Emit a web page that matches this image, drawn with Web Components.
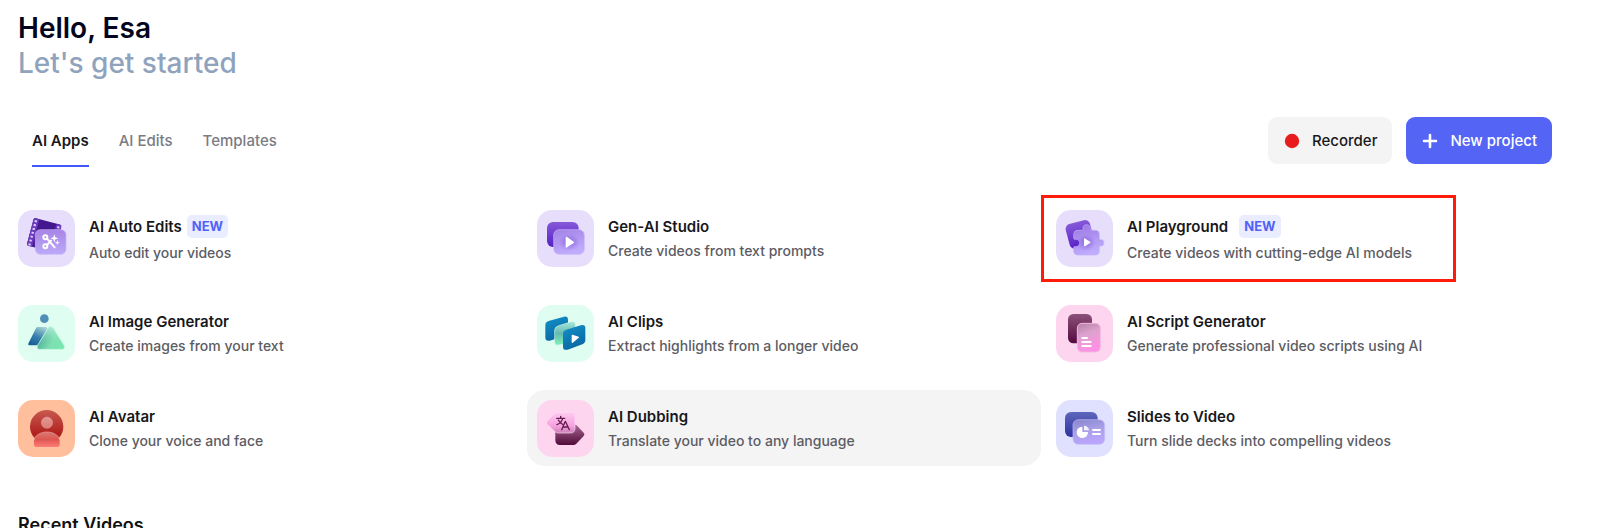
<!DOCTYPE html>
<html lang="en">
<head>
<meta charset="utf-8">
<meta name="viewport" content="width=device-width, initial-scale=1">
<title>Home</title>
<style>
  body{margin:0;background:#fff;color:#18181b;font-family:Inter,"Liberation Sans",sans-serif}
</style>
</head>
<body>
<home-page>
  <page-greeting slot="greeting">Hello, Esa<span slot="sub">Let's get started</span></page-greeting>
  <tab-strip slot="tabs"></tab-strip>
  <action-button slot="actions" kind="recorder">Recorder</action-button>
  <action-button slot="actions" kind="primary">New project</action-button>

  <app-card icon="edits" badge="NEW" heading="AI Auto Edits">Auto edit your videos</app-card>
  <app-card icon="studio" heading="Gen-AI Studio">Create videos from text prompts</app-card>
  <app-card icon="playground" badge="NEW" marked heading="AI Playground">Create videos with cutting-edge AI models</app-card>
  <app-card icon="image" heading="AI Image Generator">Create images from your text</app-card>
  <app-card icon="clips" heading="AI Clips">Extract highlights from a longer video</app-card>
  <app-card icon="script" heading="AI Script Generator">Generate professional video scripts using AI</app-card>
  <app-card icon="avatar" heading="AI Avatar">Clone your voice and face</app-card>
  <app-card icon="dubbing" active heading="AI Dubbing">Translate your video to any language</app-card>
  <app-card icon="slides" heading="Slides to Video">Turn slide decks into compelling videos</app-card>

  <span slot="recent">Recent Videos</span>
</home-page>

<script>
// tile colour + drawing, all on a 171 unit square
const ICONS={
  edits:{bg:'#e7defc',art:`
    <defs>
      <linearGradient id="g" x2="0" y2="1"><stop stop-color="#a884e6"/><stop offset="1" stop-color="#bca9f8"/></linearGradient>
      <linearGradient id="e" x2="1" y2="1"><stop stop-color="#c9b4f5"/><stop offset="1" stop-color="#c7b8fb"/></linearGradient>
    </defs>
    <g transform="translate(48 23) rotate(15)">
      <rect width="86" height="86" rx="6" fill="#43188f"/>
      <rect width="17" height="86" rx="5" fill="#6a38bd"/>
      <rect x="70" width="16" height="86" rx="5" fill="#6a38bd"/>
      <path d="M8 6v78M78 6v78" stroke="#ddcdfb" stroke-width="7" stroke-dasharray="6 6"/>
    </g>
    <rect x="52" y="59" width="92" height="74" rx="15" fill="url(#g)" stroke="url(#e)" stroke-width="2"/>
    <g fill="none" stroke="#fff" stroke-width="6" stroke-linecap="round">
      <circle cx="82" cy="82" r="6"/><circle cx="82" cy="109" r="6"/>
      <path d="M87 86l23 26M87 105l12-13"/>
    </g>
    <path d="M109 73l3 9 9 3-9 3-3 9-3-9-9-3 9-3zM118 90l2 6 6 2-6 2-2 6-2-6-6-2 6-2z" fill="#fff"/>`},
  studio:{bg:'#e7defc',art:`
    <defs>
      <linearGradient id="b" x2="0" y2="1"><stop stop-color="#8659d9"/><stop offset="1" stop-color="#5620c5"/></linearGradient>
      <linearGradient id="g" x2=".3" y2="1"><stop stop-color="#a382e6"/><stop offset="1" stop-color="#bfacfc"/></linearGradient>
      <radialGradient id="s"><stop stop-color="#7440cc" stop-opacity=".55"/><stop offset="1" stop-color="#7440cc" stop-opacity="0"/></radialGradient>
    </defs>
    <rect x="30" y="36" width="95" height="75" rx="18" fill="url(#b)"/>
    <rect x="50" y="59" width="92" height="74" rx="16" fill="url(#g)" stroke="#c9b8fa" stroke-width="2"/>
    <ellipse cx="97" cy="97" rx="32" ry="25" fill="url(#s)"/>
    <path d="M88 82v29l21-14z" fill="#fff" stroke="#fff" stroke-width="4" stroke-linejoin="round"/>`},
  playground:{bg:'#e7defc',art:`
    <defs>
      <linearGradient id="b" x2="0" y2="1"><stop stop-color="#8659d9"/><stop offset="1" stop-color="#5620c5"/></linearGradient>
      <linearGradient id="g" x2=".3" y2="1"><stop stop-color="#9a75e2"/><stop offset="1" stop-color="#bfacfc"/></linearGradient>
      <radialGradient id="s"><stop stop-color="#7440cc" stop-opacity=".55"/><stop offset="1" stop-color="#7440cc" stop-opacity="0"/></radialGradient>
    </defs>
    <rect x="34" y="35" width="75" height="76" rx="15" transform="rotate(-15 72 73)" fill="url(#b)"/>
    <path d="M66 61h12q4 0 3-5c-1-8 4-12 11-12s12 4 11 12q-1 5 3 5h11q13 0 13 13v12q0 4 4 3c13-2 13 21 0 19q-4-1-4 4v10q0 13-13 13H66q-13 0-13-13v-9q0-4 5-3c17 1 17-24 0-22q-5 1-5-4V74q0-13 13-13z" fill="url(#g)" stroke="#c3affa" stroke-width="2"/>
    <ellipse cx="90" cy="98" rx="28" ry="25" fill="url(#s)"/>
    <path d="M86 87v20l15-10z" fill="#fff" stroke="#fff" stroke-width="4" stroke-linejoin="round"/>`},
  image:{bg:'#dffdf0',art:`
    <defs>
      <linearGradient id="b" x1=".8" y1="0" x2=".3" y2="1"><stop stop-color="#a5d3d3"/><stop offset=".55" stop-color="#397fae"/><stop offset="1" stop-color="#196299"/></linearGradient>
      <linearGradient id="g" x1="0" y1=".6" x2="1" y2="1"><stop stop-color="#4fae9a"/><stop offset=".5" stop-color="#7edfb2"/><stop offset="1" stop-color="#73e9ae"/></linearGradient>
      <linearGradient id="h" x2="0" y2="1"><stop stop-color="#d5faec" stop-opacity=".75"/><stop offset=".7" stop-color="#8ce8bb" stop-opacity="0"/></linearGradient>
    </defs>
    <circle cx="79" cy="41" r="13" fill="#508fb8"/>
    <path d="M59 66h23q8 0 4 8l-25 43q-2 4-7 4H36q-8 0-4-8l22-43q2-4 5-4z" fill="url(#b)"/>
    <path d="M90 70q8-10 16 0l32 51q5 11-6 12H65q-11-1-6-12z" fill="url(#g)"/>
    <path d="M90 70q8-10 16 0l32 51q5 11-6 12H65q-11-1-6-12z" fill="url(#h)" stroke="#c4f8de" stroke-width="2"/>`},
  clips:{bg:'#dffdf0',art:`
    <defs>
      <linearGradient id="b" x2=".4" y2="1"><stop stop-color="#1492c9"/><stop offset="1" stop-color="#0968a4"/></linearGradient>
      <linearGradient id="g" x2="0" y2="1"><stop stop-color="#a9e7da"/><stop offset=".5" stop-color="#63b9b1"/><stop offset="1" stop-color="#82f3b8"/></linearGradient>
    </defs>
    <path d="M37 47l44-12q12-2 12 10v36q0 9-9 12l-46 14q-13 3-13-11V60q0-10 12-13z" fill="url(#b)"/>
    <path d="M65 62l36-11q13-4 14 8v39q0 9-9 12l-41 10q-12 2-12-10V75q0-9 12-13z" fill="url(#g)" stroke="#c7f7e7" stroke-width="2"/>
    <path d="M88 74l43-13q14-3 14 8v36q0 9-9 13l-44 16q-14 3-14-9V87q0-10 10-13z" fill="url(#b)"/>
    <path d="M106 91v21l18-15z" fill="#fff" stroke="#fff" stroke-width="4" stroke-linejoin="round"/>`},
  script:{bg:'#fdd5ee',art:`
    <defs>
      <linearGradient id="b" x2="0" y2="1"><stop stop-color="#8b5279"/><stop offset="1" stop-color="#560840"/></linearGradient>
      <linearGradient id="g" x2=".3" y2="1"><stop stop-color="#b582a5"/><stop offset=".45" stop-color="#dda1ce"/><stop offset="1" stop-color="#ff91e5"/></linearGradient>
    </defs>
    <rect x="36" y="27" width="72" height="88" rx="16" fill="url(#b)"/>
    <rect x="64" y="55" width="69" height="86" rx="14" fill="url(#g)" stroke="#f4b8e1" stroke-width="3"/>
    <path d="M79 99h14M79 111h25M79 123h25" stroke="#fff" stroke-width="6" stroke-linecap="round"/>`},
  avatar:{bg:'#ffbf9d',art:`
    <defs>
      <linearGradient id="b" x2="0" y2="1"><stop stop-color="#c75a51"/><stop offset=".75" stop-color="#af1e1b"/><stop offset="1" stop-color="#cf5e50"/></linearGradient>
      <linearGradient id="g" x2="0" y2="1"><stop stop-color="#e29791"/><stop offset="1" stop-color="#de7d77"/></linearGradient>
      <linearGradient id="h" x2="0" y2="1"><stop stop-color="#d57871"/><stop offset=".5" stop-color="#df5753"/><stop offset="1" stop-color="#fe7b76"/></linearGradient>
    </defs>
    <circle cx="86" cy="80" r="50" fill="url(#b)"/>
    <circle cx="87" cy="68" r="17" fill="url(#g)" stroke="#f0b8b0" stroke-width="1"/>
    <path d="M48 134v-13c3-16 21-25 39-25s35 9 38 25v13q0 7-7 7H55q-7 0-7-7z" fill="url(#h)"/>
    <path d="M48 121c3-16 21-25 39-25s35 9 38 25" fill="none" stroke="#f1a39c" stroke-width="2"/>`},
  dubbing:{bg:'#fdd5ee',art:`
    <defs>
      <linearGradient id="b" x2="0" y2="1"><stop stop-color="#a86995"/><stop offset="1" stop-color="#510b39"/></linearGradient>
      <linearGradient id="g" x2="0" y2="1"><stop stop-color="#fecbf0"/><stop offset=".65" stop-color="#f6a2df"/><stop offset="1" stop-color="#cb80b7"/></linearGradient>
    </defs>
    <path d="M69 73h41q7 0 11 5l19 20q5 5 0 10l-22 23q-4 4-9 4H69q-14 0-14-14V87q0-14 14-14z" fill="url(#b)"/>
    <path d="M60 37h40q14 0 14 14v34q0 14-14 14H64q-7 0-11-5L31 73q-5-5 0-10l19-21q4-5 10-5z" fill="url(#g)" stroke="#ffdcf5" stroke-width="2"/>
    <g fill="none" stroke="#651c4e" stroke-width="4" stroke-linecap="round" stroke-linejoin="round">
      <path d="M59 55h24M71 49v6M77 56q-4 13-17 18M64 60q5 9 13 13"/>
      <path d="M74 89l11-25 12 25M78 81h15"/>
    </g>`},
  slides:{bg:'#e0e1ff',art:`
    <defs>
      <linearGradient id="b" x2="0" y2="1"><stop stop-color="#5e66bb"/><stop offset="1" stop-color="#2c32a0"/></linearGradient>
      <linearGradient id="g" x2=".3" y2="1"><stop stop-color="#8785cd"/><stop offset=".55" stop-color="#aaa1e9"/><stop offset="1" stop-color="#b9a5fc"/></linearGradient>
    </defs>
    <rect x="27" y="36" width="98" height="75" rx="18" fill="url(#b)"/>
    <rect x="51" y="59" width="95" height="74" rx="16" fill="url(#g)" stroke="#c5bdf8" stroke-width="2"/>
    <path d="M79 80v16h17a17 17 0 1 1-17-16z" fill="#fff"/>
    <path d="M84 77a15 15 0 0 1 15 14H84z" fill="#fff" opacity=".85"/>
    <path d="M111 90h21M111 102h21" stroke="#fff" stroke-width="6" stroke-linecap="round"/>`}
};

class HomePage extends HTMLElement{
  constructor(){
    super();
    this.attachShadow({mode:'open'}).innerHTML=`
      <style>
        :host{display:block;padding:11px 40px 0 8px}
        .bar{display:flex;justify-content:space-between;align-items:flex-start;margin:36px 8px 0 24px}
        .actions{display:flex;gap:14px}
        .grid{display:grid;grid-template-columns:repeat(3,minmax(0,1fr));gap:19px 5px;margin-top:33px}
        h2{margin:45px 10px 0;font-size:18px;line-height:28px;font-weight:600;color:#111}
      </style>
      <slot name="greeting"></slot>
      <div class="bar">
        <slot name="tabs"></slot>
        <div class="actions"><slot name="actions"></slot></div>
      </div>
      <main class="grid"><slot></slot></main>
      <h2><slot name="recent"></slot></h2>`;
  }
}
customElements.define('home-page',HomePage);

class PageGreeting extends HTMLElement{
  constructor(){
    super();
    this.attachShadow({mode:'open'}).innerHTML=`
      <style>
        :host{display:block;padding-left:10px;font-size:28px;line-height:35px}
        h1,p{margin:0;font-size:inherit}
        h1{font-weight:600;color:#020420}
        p{font-weight:500;color:#8fa3bd}
      </style>
      <h1><slot></slot></h1>
      <p><slot name="sub"></slot></p>`;
  }
}
customElements.define('page-greeting',PageGreeting);

class TabStrip extends HTMLElement{
  constructor(){
    super(); this.attachShadow({mode:'open'});
    this._tabs=['AI Apps','AI Edits','Templates']; this._active=0;
  }
  connectedCallback(){ this.render(); }
  render(){
    this.shadowRoot.innerHTML=`
      <style>
        :host{display:block}
        .tabs{display:flex;gap:30px}
        button{
          padding:12px 0;border:0;border-bottom:2px solid transparent;background:none;
          font-family:inherit;font-size:15px;line-height:24px;font-weight:500;color:#7b7b83;cursor:pointer
        }
        button[aria-selected=true]{font-weight:600;color:#18181b;border-color:#4356fb}
      </style>
      <div class="tabs" role="tablist">
        ${this._tabs.map((t,i)=>`<button role="tab" aria-selected="${i===this._active}">${t}</button>`).join('')}
      </div>`;
    this.shadowRoot.querySelectorAll('button').forEach((b,i)=>b.onclick=()=>{ this._active=i; this.render(); });
  }
}
customElements.define('tab-strip',TabStrip);

class ActionButton extends HTMLElement{
  connectedCallback(){
    if(this.shadowRoot) return;
    const primary=this.getAttribute('kind')==='primary';
    this.attachShadow({mode:'open'}).innerHTML=`
      <style>
        :host{display:block}
        button{
          display:flex;align-items:center;gap:11px;height:47px;padding:0 15px;border:0;border-radius:9px;
          background:#f4f4f5;color:#18181b;font-family:inherit;font-size:15px;font-weight:500;white-space:nowrap;cursor:pointer
        }
        button.primary{background:#5465f5;color:#fff}
        svg{display:block;width:18px;height:18px}
      </style>
      <button class="${primary?'primary':''}">
        ${primary
          ?'<svg viewBox="0 0 18 18"><path d="M9 3v12M3 9h12" stroke="#fff" stroke-width="2.6" stroke-linecap="round"/></svg>'
          :'<svg viewBox="0 0 18 18"><circle cx="9" cy="9" r="7.2" fill="#e81c1c"/></svg>'}
        <span><slot></slot></span>
      </button>`;
  }
}
customElements.define('action-button',ActionButton);

class AppCard extends HTMLElement{
  connectedCallback(){
    if(this.shadowRoot) return;
    const icon=ICONS[this.getAttribute('icon')];
    const badge=this.getAttribute('badge');
    this.attachShadow({mode:'open'}).innerHTML=`
      <style>
        :host{display:block;position:relative}
        a{
          display:flex;align-items:center;gap:14px;padding:10px 10px 9px;border-radius:18px;
          color:inherit;text-decoration:none
        }
        :host([active]) a,a:hover{background:#f4f4f4}
        /* red outline round the highlighted app */
        :host([marked])::after{
          content:"";position:absolute;inset:-5px auto -6px -5px;width:415px;box-sizing:border-box;
          border:3px solid #ff1a0a;pointer-events:none
        }
        svg{display:block;flex:none;width:57px;height:57px;border-radius:15px}
        .text{display:grid}
        .text.badged{row-gap:2px;padding-top:2px}
        h3{display:flex;align-items:center;gap:5px;margin:0;font-size:15px;line-height:24px;font-weight:600;color:#18181b}
        :host([marked]) h3{gap:11px}
        b{padding:0 5px;border-radius:5px;background:#eaecff;font-size:13px;line-height:23px;font-weight:700;color:#5163f6}
        p{margin:0;font-size:14px;line-height:24px;font-weight:500;color:#5c5c64}
      </style>
      <a href="#${this.getAttribute('icon')}">
        <svg viewBox="0 0 171 171" aria-hidden="true"><rect width="171" height="171" fill="${icon.bg}"/>${icon.art}</svg>
        <div class="text ${badge?'badged':''}">
          <h3>${this.getAttribute('heading')}${badge?`<b>${badge}</b>`:''}</h3>
          <p><slot></slot></p>
        </div>
      </a>`;
  }
}
customElements.define('app-card',AppCard);
</script>
</body>
</html>
